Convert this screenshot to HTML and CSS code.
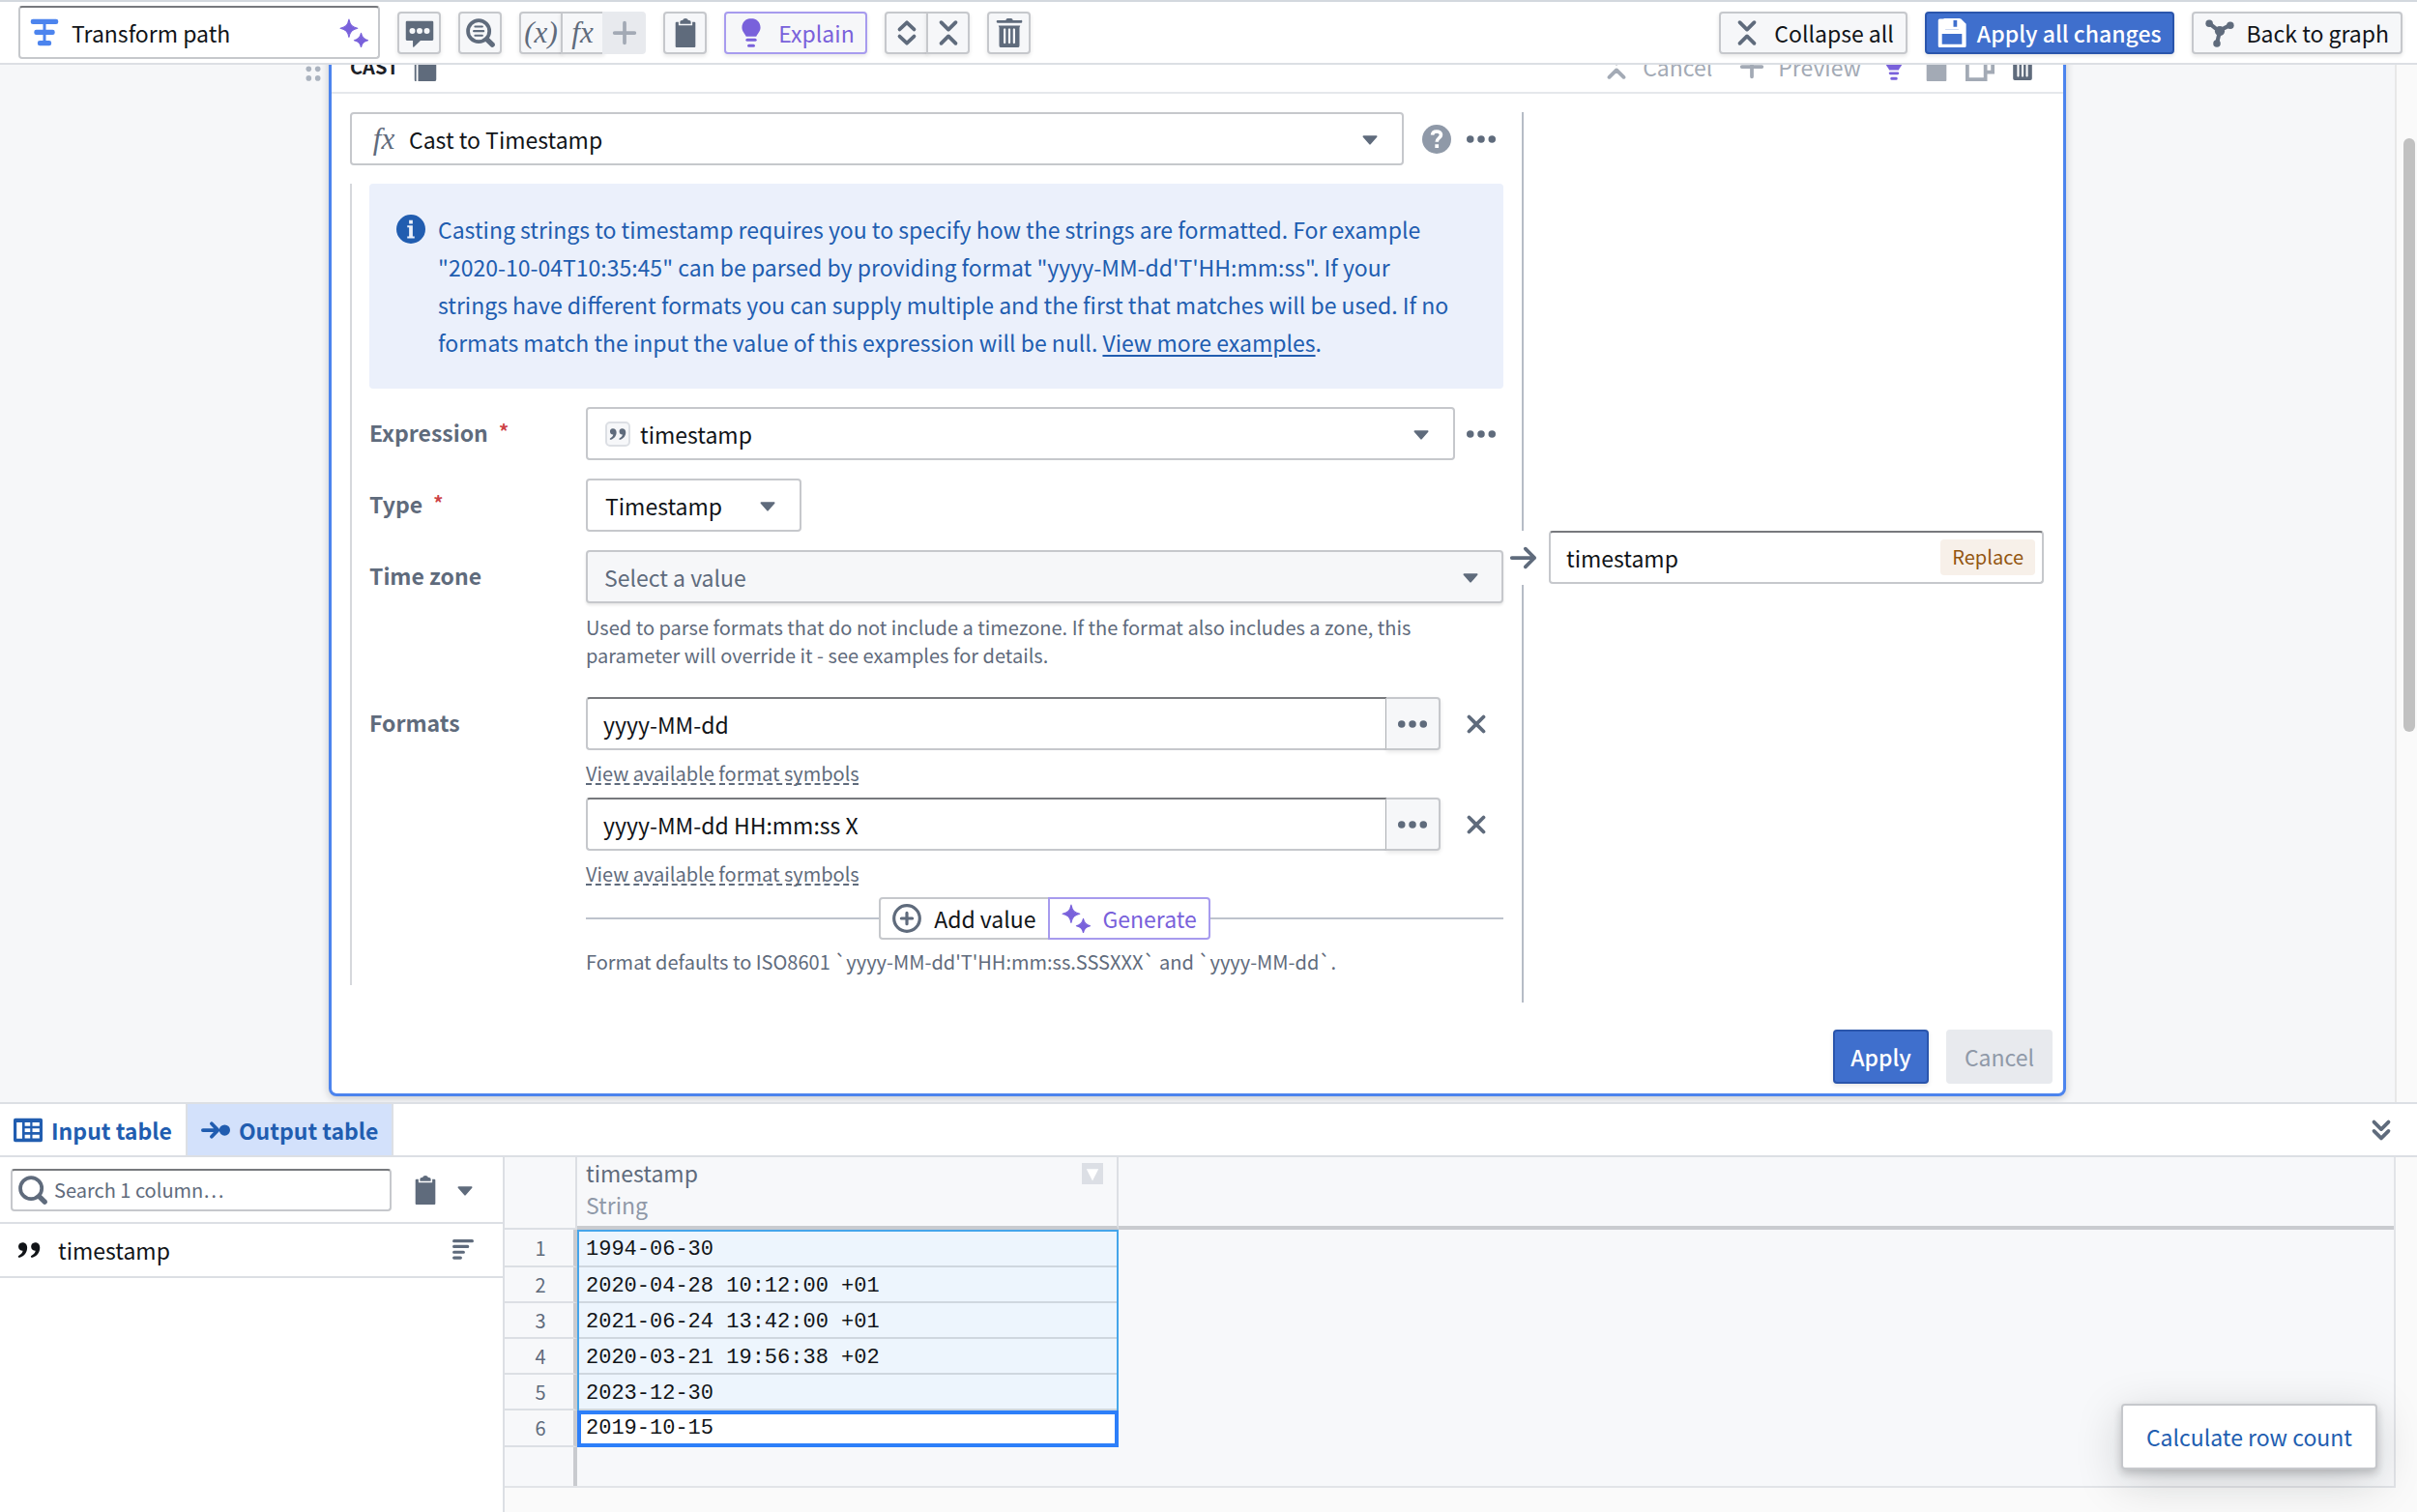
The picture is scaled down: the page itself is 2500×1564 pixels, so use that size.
FILE: index.html
```html
<!DOCTYPE html>
<html lang="en">
<head>
<meta charset="utf-8">
<title>Transform path</title>
<link rel="stylesheet" href="styles.css">
</head>
<body>
<svg class="sprite" aria-hidden="true">
  <symbol id="i-caret" viewBox="0 0 16 16"><path d="M12 6.5c0-.28-.22-.5-.5-.5h-7a.5.5 0 0 0-.37.83l3.5 4a.5.5 0 0 0 .74 0l3.5-4c.08-.09.13-.2.13-.33z"/></symbol>
  <symbol id="i-menu" viewBox="0 0 16 16"><path d="M3.500 4.500h9L8 13.500z"/></symbol>
  <symbol id="i-more" viewBox="0 0 16 16"><circle cx="2" cy="8" r="2"/><circle cx="8" cy="8" r="2"/><circle cx="14" cy="8" r="2"/></symbol>
  <symbol id="i-cross" viewBox="0 0 16 16"><path class="line" d="M4 4l8 8M12 4l-8 8"/></symbol>
  <symbol id="i-plus" viewBox="0 0 16 16"><path class="line" d="M8 2.500v11M2.500 8h11"/></symbol>
  <symbol id="i-expand" viewBox="0 0 16 16"><path class="line" d="M4 6.1l4-3.8 4 3.8M4 9.9l4 3.8 4-3.8"/></symbol>
  <symbol id="i-collapse" viewBox="0 0 16 16"><path class="line" d="M4 2.2l4 4 4-4M4 13.8l4-4 4 4"/></symbol>
  <symbol id="i-double-down" viewBox="0 0 16 16"><path class="line" d="M4 3.5l4 4 4-4M4 8.5l4 4 4-4"/></symbol>
  <symbol id="i-arrow" viewBox="0 0 16 16"><path class="line" d="M2 8h12.500M9.500 3l5 5-5 5"/></symbol>
  <symbol id="i-transform" viewBox="0 0 16 16"><rect x=".4" y=".4" width="15.200" height="2.800" rx="1.200"/><rect x="2.300" y="6.300" width="11.400" height="2.800" rx="1.200"/><rect x="4.200" y="12.200" width="7.600" height="2.800" rx="1.200"/><rect x="7.200" y="2" width="1.600" height="11"/></symbol>
  <symbol id="i-sparkle" viewBox="0 0 16 16"><path d="M5.300.6C5.900 3.700 7 4.800 10 5.500 7 6.200 5.900 7.300 5.300 10.400 4.700 7.300 3.600 6.200.6 5.500 3.600 4.800 4.700 3.700 5.300.6zM12 8.200c.5 2.400 1.400 3.300 3.800 3.900-2.400.6-3.300 1.400-3.800 3.800-.5-2.400-1.400-3.200-3.800-3.800 2.400-.6 3.300-1.500 3.800-3.900z" stroke="currentColor" stroke-width=".6" stroke-linejoin="round"/></symbol>
  <symbol id="i-chat" viewBox="0 0 16 16"><path fill-rule="evenodd" d="M1 1.500h14q.6 0 .6.600v9.500q0 .6-.6.6H8.500L4.800 15.800q-.5.3-.5-.3v-3.300H1q-.6 0-.6-.6V2.100q0-.6.6-.6zM4 5.300a1.600 1.600 0 1 0 0 3.200 1.600 1.600 0 0 0 0-3.200zm4 0a1.600 1.600 0 1 0 0 3.200 1.600 1.600 0 0 0 0-3.200zm4 0a1.600 1.600 0 1 0 0 3.200 1.600 1.600 0 0 0 0-3.200z"/></symbol>
  <symbol id="i-search" viewBox="0 0 16 16"><circle cx="7" cy="7" r="5.900" fill="none" stroke="currentColor" stroke-width="2"/><path d="M11.500 11.500l3 3" stroke="currentColor" stroke-width="2.800" stroke-linecap="round"/></symbol>
  <symbol id="i-search-text" viewBox="0 0 16 16"><circle cx="7" cy="7" r="5.900" fill="none" stroke="currentColor" stroke-width="2"/><path d="M11.500 11.500l3 3" stroke="currentColor" stroke-width="2.800" stroke-linecap="round"/><path d="M5 4.500h4M4.300 7h5.400M5 9.500h4" stroke="currentColor" stroke-width="1.100" stroke-linecap="round"/></symbol>
  <symbol id="i-clipboard" viewBox="0 0 16 16"><path d="M11 2c0-.5-.4-1-1-1H9.500C9.300.4 8.700 0 8 0S6.700.4 6.500 1H6c-.6 0-1 .5-1 1v1h6z"/><path d="M13 2h-1.200v1.900H4.200V2H3q-.5 0-.5.500v13q0 .5.500.5h10q.5 0 .5-.5v-13q0-.5-.5-.5z"/></symbol>
  <symbol id="i-bulb" viewBox="0 0 16 16"><path d="M8 0C5.100 0 2.900 2.200 2.900 5c0 2.300 1.700 3.300 2.300 5h5.600c.6-1.700 2.300-2.700 2.300-5 0-2.800-2.200-5-5.100-5z"/><rect x="5" y="11.100" width="6" height="1.600" rx=".8"/><rect x="5.900" y="14.200" width="4.200" height="1.700" rx=".8"/></symbol>
  <symbol id="i-trash" viewBox="0 0 16 16"><path d="M14.500 1H10q-.3-1-1-1H7Q6.300 0 6 1H1.500q-.6 0-.6.700T1.500 2.500h13q.6 0 .6-.8T14.500 1z"/><path fill-rule="evenodd" d="M2 4h12l-.4 1v10q0 1-1 1H3.400q-1 0-1-1V5zm2.800 2v7.500q.6 1 1.200 0V6q-.6-1-1.200 0zm2.600 0v7.500q.6 1 1.200 0V6q-.6-1-1.200 0zM10 6v7.500q.6 1 1.200 0V6q-.6-1-1.200 0z"/></symbol>
  <symbol id="i-save" viewBox="0 0 16 16"><path fill-rule="evenodd" d="M1.200.2H4v5.300q0 .5.500.5h7q.5 0 .5-.5V.2h1L15.800 3v12.200q0 .8-.8.800H1.200q-.8 0-.8-.8V1.100q0-.9.800-.9zM2.500 8.500v5.800h11V8.500z"/><path fill-rule="evenodd" d="M3.500 0h9v5.800h-9zM8.800 1v3.700h2V1z"/></symbol>
  <symbol id="i-graph" viewBox="0 0 16 16"><path d="M2.200 2.700L7.500 7l6-3.200M8 7l-1.500 6.500" fill="none" stroke="currentColor" stroke-width="2.200"/><circle cx="2.200" cy="2.800" r="2"/><circle cx="13.800" cy="3.800" r="2"/><circle cx="6.400" cy="13.800" r="2"/><circle cx="8" cy="7" r="2.700"/></symbol>
  <symbol id="i-book" viewBox="0 0 16 16"><path d="M2 0h1v16H2.500Q2 16 2 15.200zM4 0h9q1 0 1 1v14q0 1-1 1H4z"/></symbol>
  <symbol id="i-duplicate" viewBox="0 0 16 16"><path fill="none" stroke="currentColor" stroke-width="2" d="M1 4h10v11H1zM5 1h10v10h-3"/></symbol>
  <symbol id="i-info" viewBox="0 0 16 16"><path fill-rule="evenodd" d="M8 0a8 8 0 1 0 0 16A8 8 0 0 0 8 0zM7 3h2v2H7zM6 6h3v6h1v1H6v-1h1V7H6z"/></symbol>
  <symbol id="i-help" viewBox="0 0 16 16"><circle cx="8" cy="8" r="8"/><path d="M5.600 5.700C5.700 4.400 6.600 3.700 8 3.700s2.400.8 2.400 1.900c0 1.700-2.300 1.800-2.300 3.800" fill="none" stroke="#fff" stroke-width="1.900"/><rect x="7.100" y="10.800" width="2" height="2" fill="#fff"/></symbol>
  <symbol id="i-quote" viewBox="0 0 16 16"><path d="M4.300 3.800A2.300 2.300 0 1 0 4.600 8.400C4.300 9.700 3.500 10.500 2.400 11c-.8.4-.3 1.400.6 1.100C5.400 11.300 7 9.300 7 6.500c0-1.700-1.200-2.700-2.700-2.700zM11.300 3.800a2.300 2.300 0 1 0 .3 4.600c-.3 1.300-1.100 2.100-2.200 2.600-.8.4-.3 1.400.6 1.100 2.400-.8 4-2.800 4-5.600 0-1.700-1.200-2.700-2.700-2.700z"/></symbol>
  <symbol id="i-add" viewBox="0 0 16 16"><circle cx="8" cy="8" r="7.100" fill="none" stroke="currentColor" stroke-width="1.700"/><path d="M8 5v6M5 8h6" stroke="currentColor" stroke-width="1.700" stroke-linecap="round"/></symbol>
  <symbol id="i-table" viewBox="0 0 16 16"><path fill-rule="evenodd" d="M1 1.500h14q1 0 1 1v11q0 1-1 1H1q-1 0-1-1v-11q0-1 1-1zM1.700 3.700v9h3.100v-9zm4.500 0v2h3v-2zm4.200 0v2h3.900v-2zM6.200 7v2h3V7zm4.200 0v2h3.900V7zm-4.200 3.500v2h3v-2zm4.200 0v2h3.900v-2z"/></symbol>
  <symbol id="i-output" viewBox="0 0 16 16"><path class="line" d="M1 8h8M5.800 4.400L9.300 8l-3.500 3.600"/><circle cx="13" cy="8" r="3"/></symbol>
  <symbol id="i-sort" viewBox="0 0 16 16"><path d="M3 3h10M3 6.100h7.500M3 9.200h5.200M3 12.300h3.600" stroke="currentColor" stroke-width="1.700" stroke-linecap="round"/></symbol>
  <symbol id="i-grip" viewBox="0 0 16 16"><circle cx="5.500" cy="2" r="1.500"/><circle cx="10.500" cy="2" r="1.500"/><circle cx="5.500" cy="7.100" r="1.500"/><circle cx="10.500" cy="7.100" r="1.500"/><circle cx="5.500" cy="12.200" r="1.500"/><circle cx="10.500" cy="12.200" r="1.500"/></symbol>
</svg>

<div class="app">
  <header class="toolbar">
    <label class="field path-field">
      <svg class="icon blue"><use href="#i-transform"/></svg>
      <input type="text" value="Transform path" aria-label="Path name">
      <svg class="icon violet"><use href="#i-sparkle"/></svg>
    </label>
    <button class="btn square" aria-label="Comment"><svg class="icon"><use href="#i-chat"/></svg></button>
    <button class="btn square" aria-label="Search"><svg class="icon"><use href="#i-search-text"/></svg></button>
    <div class="group">
      <button class="btn square math">(x)</button>
      <button class="btn square math">fx</button>
      <button class="btn square" disabled aria-label="Add"><svg class="icon"><use href="#i-plus"/></svg></button>
    </div>
    <button class="btn square" aria-label="Paste"><svg class="icon"><use href="#i-clipboard"/></svg></button>
    <button class="btn ai explain"><svg class="icon"><use href="#i-bulb"/></svg>Explain</button>
    <div class="group">
      <button class="btn square" aria-label="Expand"><svg class="icon"><use href="#i-expand"/></svg></button>
      <button class="btn square" aria-label="Collapse"><svg class="icon"><use href="#i-collapse"/></svg></button>
    </div>
    <button class="btn square" aria-label="Delete"><svg class="icon"><use href="#i-trash"/></svg></button>
    <span class="spacer"></span>
    <button class="btn"><svg class="icon"><use href="#i-collapse"/></svg>Collapse all</button>
    <button class="btn primary"><svg class="icon"><use href="#i-save"/></svg>Apply all changes</button>
    <button class="btn"><svg class="icon"><use href="#i-graph"/></svg>Back to graph</button>
  </header>

  <main class="canvas">
    <div class="stage">
      <svg class="icon grip"><use href="#i-grip"/></svg>
      <section class="card">
        <div class="card-head">
          <h2>CAST</h2>
          <svg class="icon"><use href="#i-book"/></svg>
          <span class="spacer"></span>
          <button class="bare muted" disabled><svg class="icon"><use href="#i-collapse"/></svg>Cancel</button>
          <button class="bare muted" disabled><svg class="icon"><use href="#i-plus"/></svg>Preview</button>
          <div class="head-icons">
            <button class="bare violet" aria-label="Explain"><svg class="icon small"><use href="#i-bulb"/></svg></button>
            <button class="bare muted" disabled aria-label="Paste"><svg class="icon"><use href="#i-clipboard"/></svg></button>
            <button class="bare muted" disabled aria-label="Duplicate"><svg class="icon"><use href="#i-duplicate"/></svg></button>
            <button class="bare" aria-label="Delete"><svg class="icon small"><use href="#i-trash"/></svg></button>
          </div>
        </div>
        <div class="card-body">
          <div class="inputs">
            <div class="line-row">
              <div class="select func">
                <span class="math">fx</span>
                <select aria-label="Function"><option>Cast to Timestamp</option></select>
                <svg class="icon"><use href="#i-caret"/></svg>
              </div>
              <button class="bare help" aria-label="Help"><svg class="icon"><use href="#i-help"/></svg></button>
              <button class="bare" aria-label="More"><svg class="icon"><use href="#i-more"/></svg></button>
            </div>
            <div class="form">
              <div class="callout">
                <svg class="icon"><use href="#i-info"/></svg>
                <p>Casting strings to timestamp requires you to specify how the strings are formatted. For example "2020-10-04T10:35:45" can be parsed by providing format "yyyy-MM-dd'T'HH:mm:ss". If your strings have different formats you can supply multiple and the first that matches will be used. If no formats match the input the value of this expression will be null. <a href="#">View more examples</a>.</p>
              </div>
              <div class="row">
                <label for="expr">Expression <sup>*</sup></label>
                <div class="line-row">
                  <div class="select">
                    <span class="chip"><svg><use href="#i-quote"/></svg></span>
                    <select id="expr"><option>timestamp</option></select>
                    <svg class="icon"><use href="#i-caret"/></svg>
                  </div>
                  <button class="bare" aria-label="More"><svg class="icon"><use href="#i-more"/></svg></button>
                </div>
              </div>
              <div class="row">
                <label for="type">Type <sup>*</sup></label>
                <div class="select type">
                  <select id="type"><option>Timestamp</option></select>
                  <svg class="icon"><use href="#i-caret"/></svg>
                </div>
              </div>
              <div class="row">
                <label for="zone">Time zone</label>
                <div>
                  <div class="select filled">
                    <select id="zone"><option>Select a value</option></select>
                    <svg class="icon"><use href="#i-caret"/></svg>
                  </div>
                  <p class="hint zone-hint">Used to parse formats that do not include a timezone. If the format also includes a zone, this parameter will override it - see examples for details.</p>
                </div>
              </div>
              <div class="row">
                <label for="fmt1">Formats</label>
                <div>
                  <div class="format">
                    <input class="field" id="fmt1" type="text" value="yyyy-MM-dd">
                    <button class="btn" aria-label="More"><svg class="icon"><use href="#i-more"/></svg></button>
                    <button class="bare" aria-label="Remove"><svg class="icon"><use href="#i-cross"/></svg></button>
                  </div>
                  <p class="hint symbols"><a href="#">View available format symbols</a></p>
                  <div class="format">
                    <input class="field" type="text" value="yyyy-MM-dd HH:mm:ss X" aria-label="Second format">
                    <button class="btn" aria-label="More"><svg class="icon"><use href="#i-more"/></svg></button>
                    <button class="bare" aria-label="Remove"><svg class="icon"><use href="#i-cross"/></svg></button>
                  </div>
                  <p class="hint symbols"><a href="#">View available format symbols</a></p>
                  <div class="adder">
                    <div class="group">
                      <button class="btn plain"><svg class="icon"><use href="#i-add"/></svg>Add value</button>
                      <button class="btn plain ai"><svg class="icon"><use href="#i-sparkle"/></svg>Generate</button>
                    </div>
                  </div>
                  <p class="hint defaults">Format defaults to ISO8601 `yyyy-MM-dd'T'HH:mm:ss.SSSXXX` and `yyyy-MM-dd`.</p>
                </div>
              </div>
            </div>
          </div>
          <div class="divider"><span></span><svg class="icon"><use href="#i-arrow"/></svg><span></span></div>
          <label class="field output">
            <input type="text" value="timestamp" aria-label="Output column">
            <span class="tag">Replace</span>
          </label>
        </div>
        <div class="card-foot">
          <button class="btn tall primary">Apply</button>
          <button class="btn tall" disabled>Cancel</button>
        </div>
      </section>
    </div>
    <div class="scroll-track"><span></span></div>
  </main>

  <section class="results">
    <nav class="tabs">
      <button><svg class="icon"><use href="#i-table"/></svg>Input table</button>
      <button class="active"><svg class="icon"><use href="#i-output"/></svg>Output table</button>
      <span class="spacer"></span>
      <button class="bare" aria-label="Hide panel"><svg class="icon"><use href="#i-double-down"/></svg></button>
    </nav>
    <div class="panes">
      <aside class="columns">
        <div class="find">
          <label class="field">
            <svg class="icon"><use href="#i-search"/></svg>
            <input type="text" placeholder="Search 1 column…" aria-label="Search columns">
          </label>
          <button class="bare" aria-label="Copy"><svg class="icon"><use href="#i-clipboard"/></svg></button>
          <button class="bare" aria-label="Copy options"><svg class="icon"><use href="#i-caret"/></svg></button>
        </div>
        <div class="column-item">
          <svg class="icon"><use href="#i-quote"/></svg>timestamp<span class="spacer"></span>
          <svg class="icon slate"><use href="#i-sort"/></svg>
        </div>
      </aside>
      <div class="grid">
        <div class="grid-main">
          <table>
            <thead>
              <tr>
                <th class="num"></th>
                <th class="name"><div class="head-cell"><div>timestamp<br><span>String</span></div><button aria-label="Column menu"><svg><use href="#i-menu"/></svg></button></div></th>
                <th></th>
              </tr>
            </thead>
            <tbody>
              <tr><th>1</th><td>1994-06-30</td></tr>
              <tr><th>2</th><td>2020-04-28 10:12:00 +01</td></tr>
              <tr><th>3</th><td>2021-06-24 13:42:00 +01</td></tr>
              <tr><th>4</th><td>2020-03-21 19:56:38 +02</td></tr>
              <tr><th>5</th><td>2023-12-30</td></tr>
              <tr><th>6</th><td class="current">2019-10-15</td></tr>
            </tbody>
          </table>
          <div class="gutter"></div>
        </div>
        <button class="count">Calculate row count</button>
      </div>
    </div>
  </section>
</div>
</body>
</html>
```
FILE: styles.css
```css
:root {
  --slate: #5f6b7c;
  --ink: #111418;
  --blue: #4c84ee;
  --navy: #215db0;
  --violet: #7961db;
  --line: #dcdfe4;
  --edge: #c6c8cc;
  --wash: #f6f7f9;
  --size: 23px;
  --small: 20px;
}
* { box-sizing: border-box; }
body {
  margin: 0;
  color: var(--ink);
  font: 400 var(--size)/32px "Noto Sans CJK SC", "Open Sans", sans-serif;
}
button, input, select { font: inherit; color: inherit; margin: 0; }
h2, p { margin: 0; }
.sprite { position: absolute; width: 0; height: 0; }
.icon { flex: none; width: 30px; height: 30px; fill: currentColor; }
.icon.small { width: 28px; }
.line { fill: none; stroke: currentColor; stroke-width: 2; stroke-linecap: round; stroke-linejoin: round; }
.blue { color: var(--blue); }
.violet, .bare.violet { color: var(--violet); }
.slate { color: var(--slate); }
.spacer { flex: 1; }

.app {
  display: flex;
  flex-direction: column;
  height: 100vh;
  overflow: hidden;
  background: #fff;
  border-top: 2px solid #d3d8de;
}

/* controls */
.btn {
  display: flex;
  align-items: center;
  justify-content: center;
  gap: 13px;
  height: 44px;
  padding: 0 12px;
  background: var(--wash);
  border: 2px solid var(--edge);
  border-radius: 4px;
  box-shadow: 0 2px 4px rgba(17, 20, 24, .1);
  white-space: nowrap;
}
.btn .icon { color: var(--slate); }
.btn.square { width: 45px; padding: 0; }
.btn.tall { height: 56px; padding: 0 17px; }
.btn.tall.primary { padding: 0 16px; }
.btn.plain { background: #fff; box-shadow: none; }
.btn.primary { background: #3f6fcd; border-color: #2a55ac; color: #fff; gap: 11px; padding: 0 11px; font-weight: 500; }
.btn.primary .icon { color: #fff; }
.btn.ai, .btn.ai .icon { color: var(--violet); }
.btn.ai { border-color: #a79bee; }
.btn:disabled { background: #e8eaee; border-color: #e8eaee; color: #8f99a8; box-shadow: none; }
.btn:disabled .icon { color: #a3aab5; }
.explain { width: 148px; }
.math { font: italic 31px/36px "Liberation Serif", serif; color: var(--slate); }
.group { display: flex; }
.group .btn:not(:first-child) { margin-left: -2px; border-top-left-radius: 0; border-bottom-left-radius: 0; }
.group .btn:not(:last-child) { border-top-right-radius: 0; border-bottom-right-radius: 0; }
.bare {
  display: flex;
  align-items: center;
  gap: 12px;
  padding: 0;
  background: none;
  border: 0;
  color: var(--slate);
}
.bare.muted { color: #a3aab5; }
.field {
  display: flex;
  align-items: center;
  height: 55px;
  background: #fff;
  border: 2px solid var(--edge);
  border-top-color: #77797d;
  border-radius: 4px;
}
.field input { flex: 1; min-width: 0; padding: 0; border: 0; background: none; outline: 0; }
.select {
  display: flex;
  flex: 1;
  align-items: center;
  height: 55px;
  padding: 0 18px;
  background: #fff;
  border: 2px solid var(--edge);
  border-radius: 4px;
}
.select select { flex: 1; min-width: 0; appearance: none; padding: 0; border: 0; background: none; outline: 0; }
.select .icon { color: var(--slate); }
.select.filled { padding: 0 17px; background: var(--wash); color: var(--slate); box-shadow: 0 2px 3px rgba(17, 20, 24, .1); }

/* top bar */
.toolbar {
  display: flex;
  flex: none;
  align-items: center;
  gap: 18px;
  height: 65px;
  padding: 0 15px 0 19px;
  border-bottom: 2px solid var(--line);
}
.path-field { width: 374px; padding: 0 10px; gap: 13px; }

/* editor */
.canvas { display: flex; flex: none; background: var(--wash); overflow: hidden; }
.stage { display: flex; flex: 1; justify-content: center; padding: 0 30px 6px; }
.grip { margin: -9px 1px 0 0; color: #abb3bf; }
.card {
  flex: 0 1 1797px;
  margin: -28px 31px 0 0;
  background: #fff;
  border: 3px solid var(--blue);
  border-radius: 8px;
  box-shadow: 0 2px 8px rgba(17, 20, 24, .2);
}
.card-head {
  display: flex;
  align-items: center;
  height: 55px;
  padding: 0 28px 0 19px;
  border-bottom: 2px solid #e5e8eb;
}
.card-head h2 { margin-right: 13px; font-size: var(--small); font-weight: 600; color: #1c2127; }
.card-head > .icon { color: var(--slate); }
.card-head > .bare { margin-right: 20px; }
.card-head > .bare:nth-of-type(1) { margin-right: 26px; }
.head-icons { display: flex; gap: 15px; }
.card-body { display: grid; grid-template-columns: minmax(0, 1fr) 47px 512px; padding: 19px 20px 0 19px; }
.inputs { padding-bottom: 18px; }
.line-row { display: flex; align-items: center; gap: 12px; }
.line-row .bare { margin-right: 8px; }
.line-row .help { margin: 0 4px 0 7px; color: #8f99a8; }
.func { gap: 11px; }
.func .math { width: 30px; text-align: center; }
.form {
  display: flex;
  flex-direction: column;
  gap: 19px;
  margin-top: 19px;
  padding: 0 0 10px 18px;
  border-left: 2px solid #d6d8dc;
}
.callout { display: flex; gap: 13px; padding: 28px 40px 28px 28px; background: #ebf0fb; border-radius: 4px; color: var(--navy); line-height: 39px; }
.callout .icon { margin-top: 4px; }
.callout p { flex: 1; max-width: 1056px; }
.callout a { color: inherit; text-underline-offset: 3px; }
.row { display: grid; grid-template-columns: 224px minmax(0, 1fr); align-items: start; }
.row > label { padding-top: 10px; font-weight: 600; color: var(--slate); }
.row sup { margin-left: 6px; line-height: 0; font-size: var(--small); vertical-align: 3px; color: #cd4246; }
.chip {
  display: flex;
  align-items: center;
  justify-content: center;
  width: 26px;
  height: 26px;
  margin-right: 10px;
  background: var(--wash);
  border: 2px solid var(--line);
  border-radius: 5px;
}
.chip svg { width: 22px; height: 22px; fill: var(--slate); }
.type { width: 223px; }
.hint { font-size: var(--small); line-height: 29px; color: var(--slate); }
.hint a { color: inherit; text-decoration: underline dashed 2px; text-underline-offset: 2px; text-decoration-skip-ink: none; }
.zone-hint { max-width: 880px; padding: 10px 0; }
.symbols { padding: 9px 0 11px; }
.format { display: flex; }
.format .field { flex: 1; min-width: 0; padding: 0 16px; border-right-color: #b4b7bc; border-top-right-radius: 0; border-bottom-right-radius: 0; outline: 0; }
.format .btn { width: 56px; height: 55px; margin-left: -1px; border-left: 0; border-top-left-radius: 0; border-bottom-left-radius: 0; }
.format .bare { padding: 0 13px 0 22px; }
.adder { display: flex; align-items: center; margin-top: -1px; }
.adder::before, .adder::after { content: ""; flex: 1; height: 2px; background: #bdc3cc; }
.defaults { padding-top: 8px; }
.divider { display: flex; flex-direction: column; align-items: center; gap: 13px; padding-right: 8px; color: var(--slate); }
.divider span { flex: 1; width: 2px; background: #b6bcc6; }
.output { align-self: center; padding: 0 7px 0 16px; }
.tag { padding: 2px 12px 3px; background: #f7f0e9; border-radius: 4px; font-size: var(--small); color: #935610; }
.card-foot { display: flex; justify-content: flex-end; gap: 18px; padding: 28px 11px 10px; }
.scroll-track { flex: none; width: 23px; padding: 76px 2px 0 7px; background: #fafafa; border-left: 2px solid #e8e8e8; }
.scroll-track span { display: block; height: 614px; background: #c1c1c1; border-radius: 7px; }

/* results */
.results { display: flex; flex: 1; flex-direction: column; min-height: 0; border-top: 2px solid var(--line); }
.tabs { display: flex; flex: none; height: 55px; padding-right: 22px; border-bottom: 2px solid var(--line); }
.tabs button:not(.bare) {
  display: flex;
  align-items: center;
  gap: 9px;
  padding: 0 14px;
  background: #fff;
  border: 0;
  border-right: 2px solid var(--line);
  color: var(--navy);
  font-weight: 600;
}
.tabs button.active { background: #d3e1fb; }
.panes { display: flex; flex: 1; min-height: 0; }
.columns { flex: none; width: 522px; border-right: 2px solid var(--line); }
.find { display: flex; align-items: center; height: 69px; padding: 0 24px 0 11px; border-bottom: 2px solid var(--line); }
.find .field { flex: 1; height: 44px; gap: 7px; margin-right: 20px; padding: 0 6px; font-size: var(--small); color: var(--slate); }
.find input::placeholder { color: var(--slate); opacity: 1; }
.find .bare + .bare { margin-left: 11px; }
.column-item { display: flex; align-items: center; gap: 15px; height: 56px; padding: 0 26px 0 15px; border-bottom: 2px solid var(--line); }
.grid { position: relative; flex: 1; min-width: 0; padding: 0 22px 25px 0; background: #fafafa; }
.grid-main { display: flex; flex-direction: column; height: 100%; background: #f7f8fa; border: solid #e2e4e8; border-width: 0 2px 2px 0; }
.grid table { width: 100%; border-collapse: separate; border-spacing: 0; table-layout: fixed; }
.grid th { padding: 0; font-weight: 400; color: var(--slate); }
.grid thead th { height: 75px; border-bottom: 4px solid #c9cbcf; text-align: left; vertical-align: top; }
.grid thead .num { width: 75px; border-bottom: 2px solid var(--line); border-right: 2px solid var(--line); }
.grid thead .name { width: 560px; border-right: 2px solid var(--line); }
.head-cell { display: flex; align-items: flex-start; justify-content: space-between; padding: 0 14px 0 9px; line-height: 33px; }
.head-cell span { color: #8f99a8; }
.head-cell button { width: 22px; height: 22px; margin-top: 6px; padding: 0; background: #dcdfe5; border: 0; }
.head-cell svg { display: block; width: 22px; height: 22px; fill: #fff; }
.grid tbody th { padding-left: 3px; border-bottom: 2px solid var(--line); border-right: 4px solid #c9cbcf; font-size: var(--small); }
.grid td {
  height: 37px;
  padding: 2px 7px 0;
  background: #edf5fd;
  border: solid #45a5ea;
  border-width: 0 2px;
  box-shadow: inset 0 -2px #cfd7df;
  font: 22px/35px "Liberation Mono", monospace;
}
.grid tbody tr:first-child td { height: 39px; box-shadow: inset 0 -2px #cfd7df, inset 0 2px #45a5ea; }
.grid td.current { padding: 0 5px; background: #fff; border: 4px solid #2d7ff9; line-height: 30px; box-shadow: none; }
.gutter { flex: 1; width: 75px; border-right: 4px solid #c9cbcf; }
.count {
  position: absolute;
  right: 41px;
  bottom: 44px;
  height: 68px;
  padding: 0 24px;
  background: #fff;
  border: 2px solid var(--edge);
  border-radius: 4px;
  box-shadow: 0 4px 8px rgba(17, 20, 24, .2), 0 12px 48px rgba(17, 20, 24, .18);
  color: var(--navy);
}
```
